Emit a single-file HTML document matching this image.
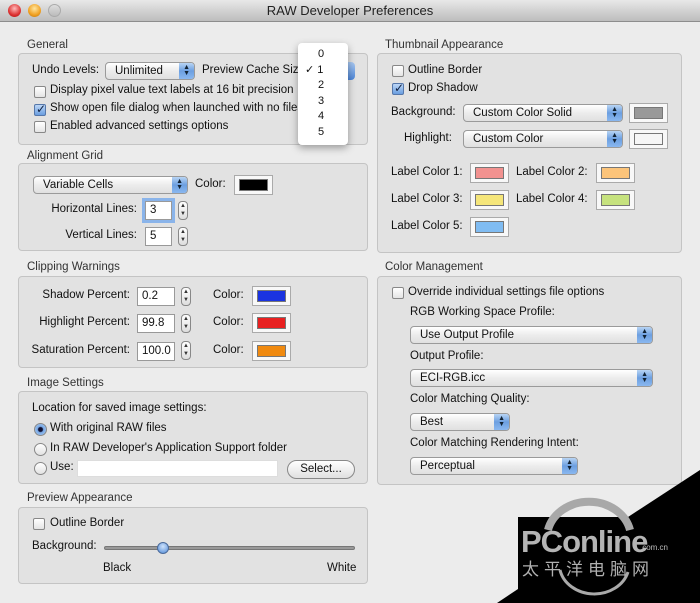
<!DOCTYPE html>
<html><head><meta charset="utf-8"><style>
*{box-sizing:border-box;margin:0;padding:0}
body{width:700px;height:603px;overflow:hidden;background:#ececec;font:11.5px "Liberation Sans","DejaVu Sans",sans-serif;color:#111;position:relative}
.a{position:absolute;white-space:nowrap}
.title{left:0;top:0;width:700px;height:22px;background:linear-gradient(#e8e8e8,#bdbdbd);border-bottom:1px solid #8d8d8d}
.box{position:absolute;background:#e2e2e2;border:1px solid #c4c4c4;border-radius:4px}
.lbl{position:absolute;color:#333;font-size:11.5px}
.pop{position:absolute;height:18px;border:1px solid #9a9a9a;border-radius:4px;background:linear-gradient(#fff,#ececec 50%,#e0e0e0);padding-left:9px;line-height:16px;font-size:11.5px}
.pop:after{content:"";position:absolute;right:0;top:0;width:15px;height:16px;border-radius:0 3px 3px 0;background:linear-gradient(#b8d4f4,#6c9fe0 50%,#8ab8f0)}
.pop i{position:absolute;right:4px;top:2px;z-index:2;font-style:normal;font-size:7px;line-height:6px;color:#123;text-align:center}
.cb{position:absolute;width:12px;height:12px;border:1px solid #888;border-radius:2px;background:linear-gradient(#fff,#e4e4e4)}
.cb.on{background:linear-gradient(#bcd6f6,#6a9ee0);border-color:#5577aa}
.cb.on:after{content:"✓";position:absolute;left:1px;top:-3px;font-size:12px;font-weight:bold;color:#102040}
.rd{position:absolute;width:13px;height:13px;border:1px solid #888;border-radius:50%;background:linear-gradient(#fff,#e2e2e2)}
.rd.on{background:radial-gradient(circle,#113 0 2px,#7aaae6 3px,#aecdf2)}
.sw{position:absolute;width:39px;height:20px;border:1px solid #aaa;background:#f8f8f8;padding:3px 4px}
.sw b{display:block;width:100%;height:100%;border:1px solid #777}
.fld{position:absolute;height:19px;border:1px solid #999;background:#fff;padding-left:4px;line-height:17px}
.st{position:absolute;width:10px;height:19px;border:1px solid #888;border-radius:4px;background:linear-gradient(#fff,#ddd);font-size:6px;line-height:8px;text-align:center;color:#333}
</style></head><body>
<div class="a title"></div>
<div class="a" style="left:8px;top:4px;width:13px;height:13px;border-radius:50%;background:radial-gradient(circle at 50% 35%,#fbb,#d33 60%,#a11)"></div>
<div class="a" style="left:28px;top:4px;width:13px;height:13px;border-radius:50%;background:radial-gradient(circle at 50% 35%,#ffe6a0,#f0a020 60%,#b67010)"></div>
<div class="a" style="left:48px;top:4px;width:13px;height:13px;border-radius:50%;background:linear-gradient(#ddd,#bbb);border:1px solid #aaa"></div>
<div class="a" style="left:0;width:700px;top:3px;text-align:center;font-size:13px;color:#222">RAW Developer Preferences</div>

<div class="lbl" style="left:27px;top:39px">General</div>
<div class="box" style="left:18px;top:53px;width:350px;height:92px"></div>
<div class="a" style="left:32px;top:64px">Undo Levels:</div>
<div class="pop" style="left:105px;top:62px;width:90px">Unlimited<i>▲<br>▼</i></div>
<div class="a" style="left:202px;top:64px">Preview Cache Size</div>
<div class="a" style="left:300px;top:62px;width:55px;height:18px;border-radius:4px;background:linear-gradient(#a9c9f2,#4d86d8)"></div>
<div class="cb" style="left:34px;top:86px"></div><div class="a" style="left:50px;top:84px">Display pixel value text labels at 16 bit precision</div>
<div class="cb on" style="left:34px;top:104px"></div><div class="a" style="left:50px;top:102px">Show open file dialog when launched with no files</div>
<div class="cb" style="left:34px;top:121px"></div><div class="a" style="left:50px;top:120px">Enabled advanced settings options</div>
<div class="a" style="left:298px;top:43px;width:50px;height:102px;background:#fff;border-radius:4px;box-shadow:0 3px 8px rgba(0,0,0,.35);font-size:11px;line-height:15.5px;padding-top:4px">
<div style="padding-left:20px">0</div><div style="padding-left:7px">✓ 1</div><div style="padding-left:20px">2</div><div style="padding-left:20px">3</div><div style="padding-left:20px">4</div><div style="padding-left:20px">5</div></div>

<div class="lbl" style="left:27px;top:150px">Alignment Grid</div>
<div class="box" style="left:18px;top:163px;width:350px;height:88px"></div>
<div class="pop" style="left:33px;top:176px;width:155px">Variable Cells<i>▲<br>▼</i></div>
<div class="a" style="left:195px;top:178px">Color:</div>
<div class="sw" style="left:234px;top:175px"><b style="background:#000"></b></div>
<div class="a" style="right:563px;top:203px">Horizontal Lines:</div>
<div class="fld" style="left:145px;top:201px;width:27px;box-shadow:0 0 0 3px #8ab4ea">3</div>
<div class="st" style="left:178px;top:201px">▲<br>▼</div>
<div class="a" style="right:563px;top:229px">Vertical Lines:</div>
<div class="fld" style="left:145px;top:227px;width:27px">5</div>
<div class="st" style="left:178px;top:227px">▲<br>▼</div>

<div class="lbl" style="left:27px;top:261px">Clipping Warnings</div>
<div class="box" style="left:18px;top:276px;width:350px;height:92px"></div>
<div class="a" style="right:570px;top:289px">Shadow Percent:</div>
<div class="fld" style="left:137px;top:287px;width:38px">0.2</div><div class="st" style="left:181px;top:287px">▲<br>▼</div>
<div class="a" style="left:213px;top:289px">Color:</div><div class="sw" style="left:252px;top:286px"><b style="background:#1a33e0"></b></div>
<div class="a" style="right:570px;top:316px">Highlight Percent:</div>
<div class="fld" style="left:137px;top:314px;width:38px">99.8</div><div class="st" style="left:181px;top:314px">▲<br>▼</div>
<div class="a" style="left:213px;top:316px">Color:</div><div class="sw" style="left:252px;top:313px"><b style="background:#e82020"></b></div>
<div class="a" style="right:570px;top:344px">Saturation Percent:</div>
<div class="fld" style="left:137px;top:342px;width:38px">100.0</div><div class="st" style="left:181px;top:341px">▲<br>▼</div>
<div class="a" style="left:213px;top:344px">Color:</div><div class="sw" style="left:252px;top:341px"><b style="background:#f08a10"></b></div>

<div class="lbl" style="left:27px;top:377px">Image Settings</div>
<div class="box" style="left:18px;top:391px;width:350px;height:93px"></div>
<div class="a" style="left:32px;top:402px">Location for saved image settings:</div>
<div class="rd on" style="left:34px;top:423px"></div><div class="a" style="left:50px;top:422px">With original RAW files</div>
<div class="rd" style="left:34px;top:443px"></div><div class="a" style="left:50px;top:442px">In RAW Developer's Application Support folder</div>
<div class="rd" style="left:34px;top:462px"></div><div class="a" style="left:50px;top:461px">Use:</div>
<div class="a" style="left:77px;top:460px;width:201px;height:17px;background:#fff;border:1px solid #ddd"></div>
<div class="a" style="left:287px;top:460px;width:68px;height:19px;border:1px solid #888;border-radius:10px;background:linear-gradient(#fff,#e0e0e0);text-align:center;line-height:17px">Select...</div>

<div class="lbl" style="left:27px;top:492px">Preview Appearance</div>
<div class="box" style="left:18px;top:507px;width:350px;height:77px"></div>
<div class="cb" style="left:33px;top:518px"></div><div class="a" style="left:50px;top:517px">Outline Border</div>
<div class="a" style="left:32px;top:540px">Background:</div>
<div class="a" style="left:104px;top:546px;width:251px;height:4px;border-radius:2px;background:#999;border:1px solid #777"></div>
<div class="a" style="left:157px;top:542px;width:12px;height:12px;border-radius:50%;background:radial-gradient(circle at 50% 35%,#cfe2fa,#4f8ad8);border:1px solid #4a6a9a"></div>
<div class="a" style="left:103px;top:562px">Black</div>
<div class="a" style="left:327px;top:562px">White</div>

<div class="lbl" style="left:385px;top:39px">Thumbnail Appearance</div>
<div class="box" style="left:377px;top:53px;width:305px;height:200px"></div>
<div class="cb" style="left:392px;top:65px"></div><div class="a" style="left:408px;top:64px">Outline Border</div>
<div class="cb on" style="left:392px;top:83px"></div><div class="a" style="left:408px;top:82px">Drop Shadow</div>
<div class="a" style="left:391px;top:106px">Background:</div>
<div class="pop" style="left:463px;top:104px;width:160px">Custom Color Solid<i>▲<br>▼</i></div>
<div class="sw" style="left:629px;top:103px"><b style="background:#999"></b></div>
<div class="a" style="left:404px;top:132px">Highlight:</div>
<div class="pop" style="left:463px;top:130px;width:160px">Custom Color<i>▲<br>▼</i></div>
<div class="sw" style="left:629px;top:129px"><b style="background:#f6f6f6"></b></div>
<div class="a" style="left:391px;top:166px">Label Color 1:</div><div class="sw" style="left:470px;top:163px"><b style="background:#f29290"></b></div>
<div class="a" style="left:516px;top:166px">Label Color 2:</div><div class="sw" style="left:596px;top:163px"><b style="background:#fcc47a"></b></div>
<div class="a" style="left:391px;top:193px">Label Color 3:</div><div class="sw" style="left:470px;top:190px"><b style="background:#f5e67a"></b></div>
<div class="a" style="left:516px;top:193px">Label Color 4:</div><div class="sw" style="left:596px;top:190px"><b style="background:#c6e27e"></b></div>
<div class="a" style="left:391px;top:220px">Label Color 5:</div><div class="sw" style="left:470px;top:217px"><b style="background:#80bcf2"></b></div>

<div class="lbl" style="left:385px;top:261px">Color Management</div>
<div class="box" style="left:377px;top:276px;width:305px;height:209px"></div>
<div class="cb" style="left:392px;top:287px"></div><div class="a" style="left:408px;top:286px">Override individual settings file options</div>
<div class="a" style="left:410px;top:306px">RGB Working Space Profile:</div>
<div class="pop" style="left:410px;top:326px;width:243px">Use Output Profile<i>▲<br>▼</i></div>
<div class="a" style="left:410px;top:350px">Output Profile:</div>
<div class="pop" style="left:410px;top:369px;width:243px">ECI-RGB.icc<i>▲<br>▼</i></div>
<div class="a" style="left:410px;top:393px">Color Matching Quality:</div>
<div class="pop" style="left:410px;top:413px;width:100px">Best<i>▲<br>▼</i></div>
<div class="a" style="left:410px;top:437px">Color Matching Rendering Intent:</div>
<div class="pop" style="left:410px;top:457px;width:168px">Perceptual<i>▲<br>▼</i></div>

<svg class="a" style="left:0;top:0" width="700" height="603"><polygon points="518,517 628,517 700,470 700,603 497,603 518,589" fill="#000"/>
<path d="M548 530 A42 36 0 0 1 630 530" stroke="#a8a8a8" stroke-width="8" fill="none"/>
<path d="M560 570 A35 30 0 0 0 628 572" stroke="#aaa" stroke-width="3" fill="none"/></svg>
<div class="a" style="left:521px;top:524px;font-size:31px;font-weight:bold;color:#b4b4b4;letter-spacing:-1px">PConline</div>
<div class="a" style="left:640px;top:543px;font-size:8px;color:#bbb">.com.cn</div>
<div class="a" style="left:522px;top:555px;font:17px 'Noto Sans CJK SC',sans-serif;color:#b0b0b0;letter-spacing:5px">太平洋电脑网</div>
</body></html>
